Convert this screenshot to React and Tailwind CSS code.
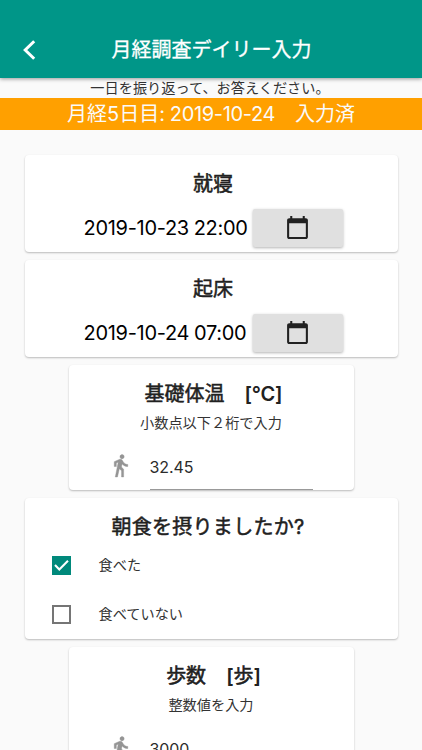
import React, { useState } from "react";

const Card = ({ className = "", children }) => (
  <section
    className={`bg-white rounded shadow-[0_1px_2px_rgba(0,0,0,0.26)] shrink-0 flex flex-col items-center overflow-hidden ${className}`}
  >
    {children}
  </section>
);

const CardTitle = ({ className = "pl-[4px]", children }) => (
  <h2
    className={`text-[20px] leading-[30px] font-normal text-[#212121] whitespace-pre [-webkit-text-stroke:0.5px_#212121] ${className}`}
  >
    {children}
  </h2>
);

const CalendarIcon = () => (
  <svg viewBox="0 0 24 24" className="size-[25px] -mt-px" fill="#212121">
    <path d="M20 3h-1V1h-2v2H7V1H5v2H4c-1.1 0-2 .9-2 2v16c0 1.1.9 2 2 2h16c1.1 0 2-.9 2-2V5c0-1.1-.9-2-2-2zm0 18H4V8h16v13z" />
  </svg>
);

const WalkIcon = () => (
  <svg
    viewBox="0 0 24 24"
    className="size-[25px] mt-[2px] -ml-[2px] mr-px shrink-0"
    fill="#959595"
    stroke="#959595"
    strokeWidth="0.4"
  >
    <path d="M13.5 5.5c1.1 0 2-.9 2-2s-.9-2-2-2-2 .9-2 2 .9 2 2 2zM9.8 8.9L7 23h2.1l1.8-8 2.1 2v6h2v-7.5l-2.1-2 .6-3C14.8 12 16.8 13 19 13v-2c-1.9 0-3.5-1-4.3-2.4l-1-1.6c-.4-.6-1-1-1.7-1-.3 0-.5.1-.8.1L6 8.3V13h2V9.6l1.8-.7z" />
  </svg>
);

const DateCard = ({ title, value }) => (
  <Card className="w-[373px] h-[97px] pt-[14px]">
    <CardTitle>{title}</CardTitle>
    <div className="flex items-center gap-[5px] mt-[10px] pl-[4px]">
      <span className="w-[164px] text-[20px] leading-[38px] text-black tracking-[-0.3px] [word-spacing:-0.5px] whitespace-nowrap">
        {value}
      </span>
      <button
        aria-label={title}
        className="w-[90px] h-[38px] rounded-[2px] bg-[#e0e0e0] flex items-center justify-center shadow-[0_1px_3px_rgba(0,0,0,0.3)]"
      >
        <CalendarIcon />
      </button>
    </div>
  </Card>
);

const NumberCard = ({ title, unit, hint, value }) => (
  <Card className="w-[285px] h-[125px] pt-[14px]">
    <CardTitle className="pl-[5px]">
      {title}　<span className="font-semibold tracking-[-0.2px] [-webkit-text-stroke:0px]">[</span>
      {unit === "°C" ? (
        <span className="font-semibold tracking-[-0.4px] [-webkit-text-stroke:0px]">{unit}</span>
      ) : (
        unit
      )}
      <span className="font-semibold [-webkit-text-stroke:0px]">]</span>
    </CardTitle>
    <p className="text-[14.2px] leading-[20px] mt-[4px] text-[#333]">{hint}</p>
    {/* INPUT */}
    <div className="flex w-[203px] mt-[18px] gap-[16px]">
      <WalkIcon />
      <input
        defaultValue={value}
        className="w-[163px] h-[40px] pb-[7px] text-[16px] tracking-[-0.1px] text-[#2b2b2b] border-b-2 border-[#999] outline-none"
      />
    </div>
  </Card>
);

const Option = ({ label, checked, onClick }) => (
  <button onClick={onClick} className="flex items-center h-[49px] shrink-0 w-full pl-[27px] text-left">
    <span
      className={`size-[19px] flex items-center justify-center ${
        checked ? "bg-[#00897b]" : "border-2 border-[#757575]"
      }`}
    >
      {checked && (
        <svg viewBox="0 0 19 19" className="size-[19px] shrink-0" fill="none" stroke="white" strokeWidth="2.1">
          <path d="M3 9l4.3 4.4L16 4.8" />
        </svg>
      )}
    </span>
    <span className="ml-[28px] -mt-px text-[14.2px] text-[#333]">{label}</span>
  </button>
);

const options = ["食べた", "食べていない"];

const App = () => {
  const [breakfast, setBreakfast] = useState(0);

  return (
    <div className="h-[750px] w-[422px] overflow-hidden bg-[#fafafa] flex flex-col font-[Inter,'Noto_Sans_CJK_JP',sans-serif]">
      {/* HEADER */}
      <header className="relative h-[78px] shrink-0 bg-[#009688] shadow-[0_1px_4px_rgba(0,0,0,0.4)] flex items-center pt-[21px] pl-[23px]">
        <button aria-label="戻る" className="w-[13px]">
          <svg viewBox="0 0 13 20" className="w-[13px] h-[20px]" fill="none" stroke="white" strokeWidth="3">
            <path d="M11.2 1.2L2.2 10l9 8.8" />
          </svg>
        </button>
        <h1 className="flex-1 pr-[35px] text-center text-white text-[20px] font-normal [-webkit-text-stroke:0.3px_white]">
          月経調査デイリー入力
        </h1>
      </header>

      <p className="h-[20px] shrink-0 pr-[2px] text-center text-[14.2px] leading-[20px] text-[#333]">
        一日を振り返って、お答えください。
      </p>
      <p className="h-[32px] shrink-0 bg-[#ffa000] text-center text-[20px] leading-[32px] text-[#fafafa]">
        月経5日目<span className="tracking-[-0.35px]">: 2019-10-24</span>　入力済
      </p>

      {/* QUESTIONS */}
      <main className="flex flex-col items-center gap-[8px] pt-[25px]">
        <DateCard title="就寝" value="2019-10-23 22:00" />
        <DateCard title="起床" value="2019-10-24 07:00" />
        <NumberCard title="基礎体温" unit="°C" hint="小数点以下２桁で入力" value="32.45" />
        <Card className="w-[373px] h-[141px] pt-[14px]">
          <CardTitle className="pr-[6px] tracking-[0.3px]">朝食を摂りましたか?</CardTitle>
          <div className="w-full -mt-px flex flex-col">
            {options.map((label, i) => (
              <Option key={label} label={label} checked={breakfast === i} onClick={() => setBreakfast(i)} />
            ))}
          </div>
        </Card>
        <NumberCard title="歩数" unit="歩" hint="整数値を入力" value="3000" />
      </main>
    </div>
  );
};

export default App;
